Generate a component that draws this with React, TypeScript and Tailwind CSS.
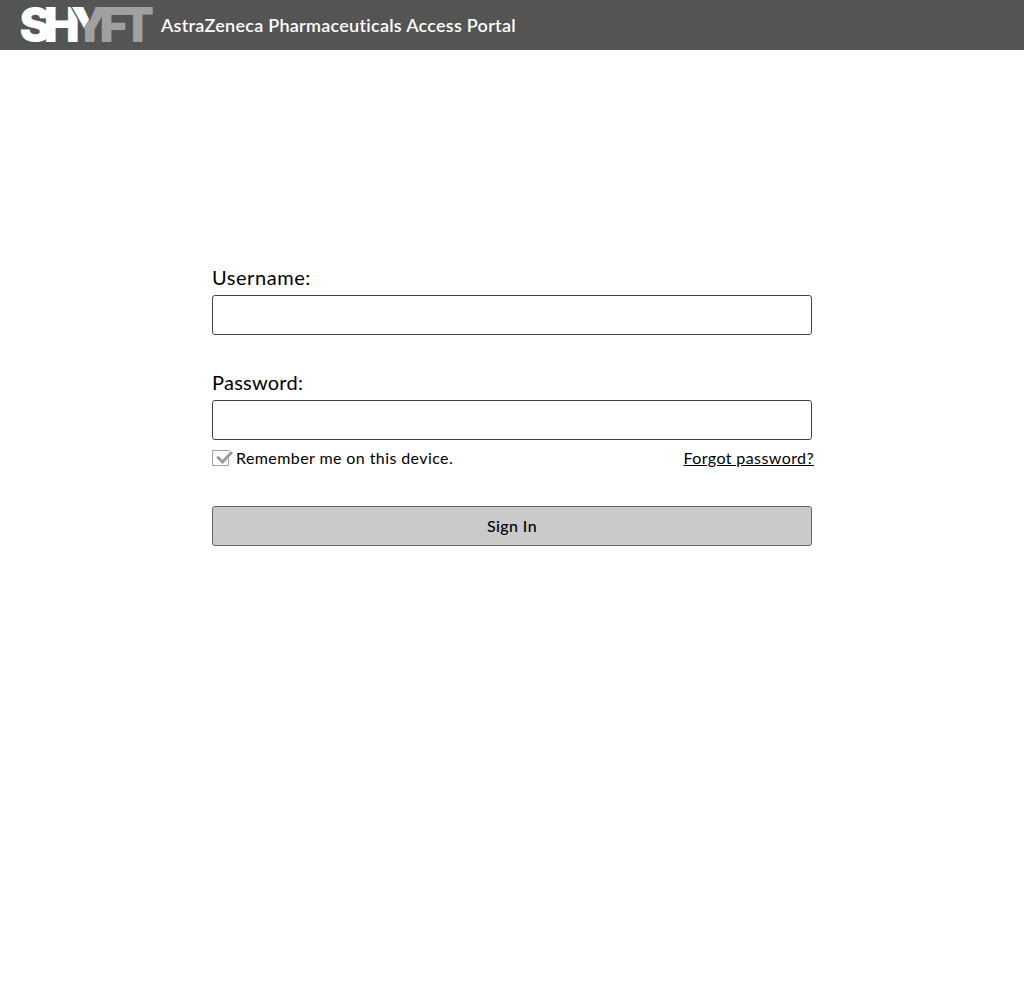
import React from "react";

function Logo() {
  return (
    <svg width="136" height="40" viewBox="20 5 136 40" role="img" aria-label="SHYFT" className="block shrink-0 overflow-visible">
      <defs>
        <linearGradient id="split" gradientUnits="userSpaceOnUse" x1="79.5" y1="19.5" x2="93.5" y2="27.5">
          <stop offset="0.5" stopColor="#ffffff" />
          <stop offset="0.5" stopColor="#a0a0a0" />
        </linearGradient>
      </defs>
      <g fontFamily="Inter, sans-serif" fontWeight="900" fontSize="47.5" className="select-none">
        <text x="19.5" y="41.7" fill="#fff" textLength="31" lengthAdjust="spacingAndGlyphs">S</text>
        <text x="43.8" y="41.7" fill="#fff" textLength="36" lengthAdjust="spacingAndGlyphs">H</text>
        <text x="71" y="41.7" fill="url(#split)" stroke="#545454" strokeWidth="2.8" paintOrder="stroke" textLength="37" lengthAdjust="spacingAndGlyphs">Y</text>
        <text x="99.5" y="41.7" fill="#a0a0a0" textLength="28.5" lengthAdjust="spacingAndGlyphs">F</text>
        <text x="121.5" y="41.7" fill="#a0a0a0" textLength="32.5" lengthAdjust="spacingAndGlyphs">T</text>
      </g>
      <rect x="99" y="7.3" width="40" height="7.6" fill="#a0a0a0" />
    </svg>
  );
}

function Field({ label, type, spacing }: { label: string; type: string; spacing: string }) {
  return (
    <label className="block">
      <span className={`block h-[35px] pt-[2px] text-[20px] leading-[30px] ${spacing}`}>{label}</span>
      <input type={type} className="block h-10 w-full rounded-[3px] border border-[#444] bg-white px-2 outline-none" />
    </label>
  );
}

export default function App() {
  return (
    <div className="min-h-[1000px] bg-white font-['Lato',sans-serif] text-black">
      <header className="flex h-[50px] items-center bg-[#545454] pl-5 text-white">
        <Logo />
        <h1 className="ml-[5px] whitespace-nowrap pb-px text-[18px] font-semibold leading-6 tracking-[0.265px]">
          AstraZeneca Pharmaceuticals Access Portal
        </h1>
      </header>
      <form className="mx-auto w-[600px] pt-[210px]">
        <Field label="Username:" type="text" spacing="tracking-[0.55px]" />
        <div className="mt-[30px]">
          <Field label="Password:" type="password" spacing="tracking-[0.25px]" />
        </div>
        <div className="mt-[6px] -mr-[2px] flex h-6 items-center justify-between text-[16px] leading-6 tracking-[0.41px]">
          <div className="flex items-center">
            <svg width="22" height="18" viewBox="0 0 22 18" fill="none" className="mr-[2px]">
              <path d="M17.5 1.5 H0.5 V16.5 H16.5 V9" stroke="#a0a0a0" />
              <path d="M5.2 7.8 L10.5 13 L20 3" stroke="#999" strokeWidth="2.8" />
            </svg>
            <span className="whitespace-nowrap">Remember me on this device.</span>
          </div>
          <a className="whitespace-nowrap underline">Forgot password?</a>
        </div>
        <button type="button" className="mt-[36px] block h-10 w-full rounded-[3px] border border-[#666] bg-[#cacaca] text-[16px] font-medium tracking-[0.4px]">
          Sign In
        </button>
      </form>
    </div>
  );
}
